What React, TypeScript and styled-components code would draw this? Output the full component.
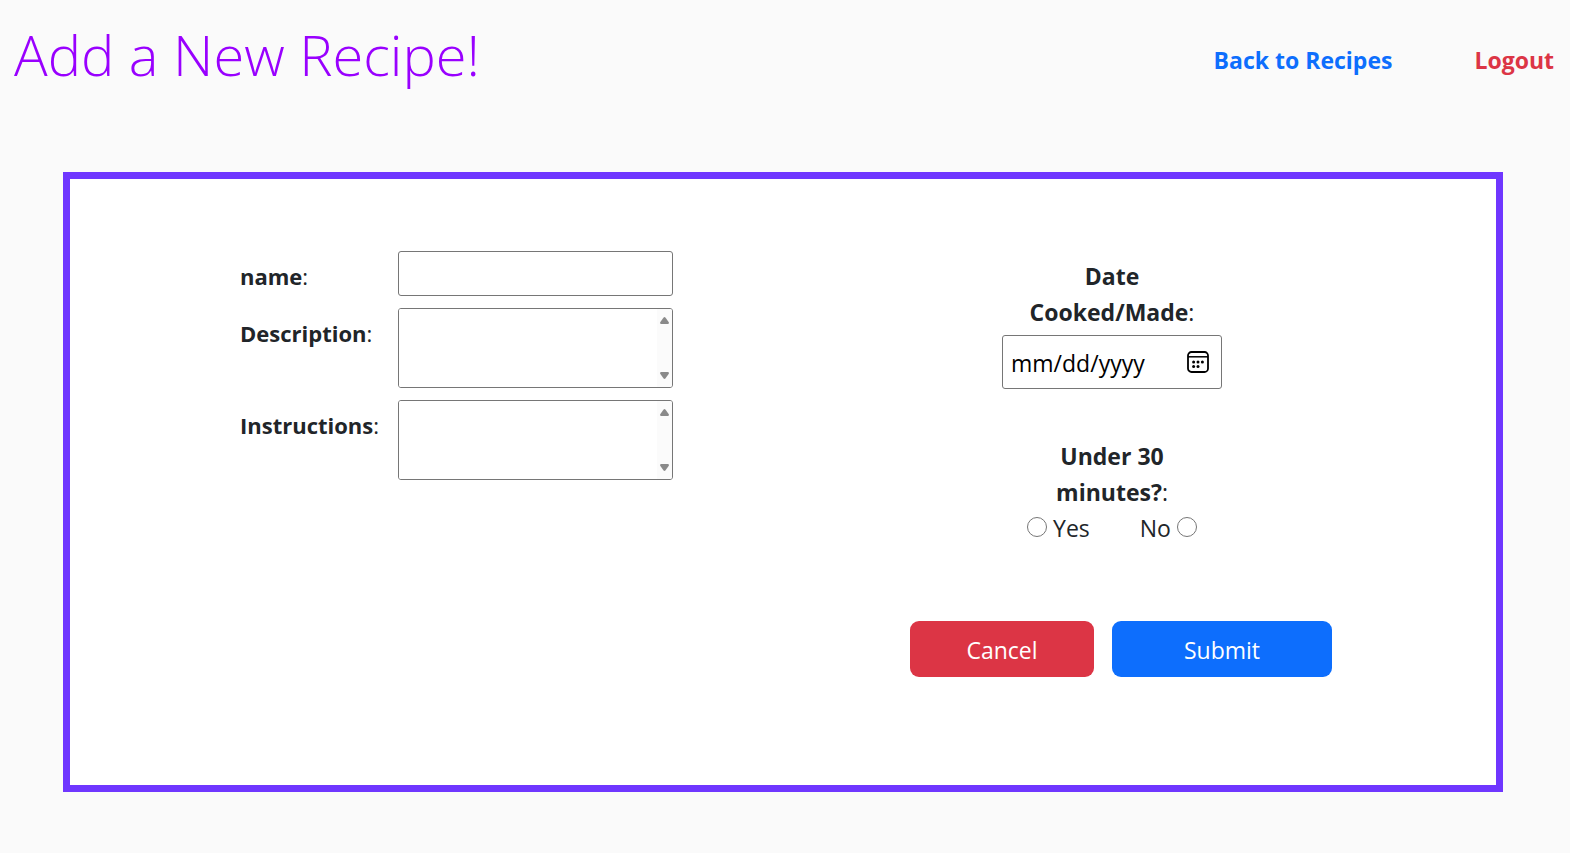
import React from "react";
import styled, { createGlobalStyle } from "styled-components";

const GlobalStyle = createGlobalStyle`
  * { box-sizing: border-box; }
  body {
    margin: 0;
    background: #fafafa;
    color: #212529;
    font: 400 23px/36px "Open Sans", "Noto Sans", sans-serif;
  }
  b { font-weight: 700; }
  input, textarea, button { font: inherit; }
`;

const Header = styled.header`
  display: flex;
  align-items: flex-start;
  justify-content: space-between;
  padding: 18px 16px 0 14px;
`;

const Title = styled.h1`
  margin: 0;
  font-size: 56px;
  font-weight: 300;
  line-height: 72px;
  color: #9900ff;
`;

const Nav = styled.nav`
  display: flex;
  gap: 82px;
  padding-top: 24px;
`;

const NavLink = styled.a<{ $color: string }>`
  color: ${(p) => p.$color};
  font-weight: 700;
  text-decoration: none;
`;

const Card = styled.form`
  display: flex;
  justify-content: space-between;
  min-height: 620px;
  margin: 82px 67px 61px 63px;
  padding: 72px 164px 72px 170px;
  border: 7px solid #6f36ff;
  background: #fff;
`;

const Fields = styled.div`
  display: grid;
  grid-template-columns: 158px 275px;
  row-gap: 12px;
  align-content: start;
`;

const FieldLabel = styled.label`
  padding-top: 7px;
  font-size: 22px;
`;

const TextInput = styled.input`
  width: 100%;
  height: 45px;
  padding: 0 8px;
  border: 1px solid #767676;
  border-radius: 3px;
  background: #fff;
`;

const AreaFrame = styled.div`
  display: flex;
  height: 80px;
  border: 1px solid #767676;
  border-radius: 3px;
  overflow: hidden;
`;

const Area = styled.textarea`
  flex: 1;
  min-width: 0;
  padding: 3px;
  border: 0;
  outline: 0;
  resize: none;
  overflow: hidden;
  background: #fff;
`;

const ScrollTrack = styled.div`
  display: flex;
  flex-direction: column;
  justify-content: space-between;
  align-items: center;
  width: 15px;
  padding: 8px 0;
  background: #fbfbfb;
`;

const Details = styled.div`
  width: 422px;
`;

const Group = styled.fieldset`
  display: flex;
  flex-direction: column;
  align-items: center;
  min-width: 0;
  margin: 0 18px 0 0;
  padding: 7px 0 0;
  border: 0;
  text-align: center;
`;

const GroupLabel = styled.label`
  width: 180px;
`;

const DateFrame = styled.div`
  position: relative;
  width: 220px;
  margin: 5px 0 42px;
`;

const DateInput = styled.input`
  display: block;
  width: 100%;
  height: 54px;
  padding: 4px 8px 2px;
  border: 1px solid #767676;
  border-radius: 3px;
  background: #fff;
  color: #000;
  &::-webkit-datetime-edit-fields-wrapper { padding: 0; }
  &::-webkit-datetime-edit-month-field,
  &::-webkit-datetime-edit-day-field,
  &::-webkit-datetime-edit-year-field { padding: 0; }
  &::-webkit-calendar-picker-indicator { opacity: 0; }
`;

const CalendarIcon = styled.svg`
  position: absolute;
  top: 16px;
  right: 13px;
  pointer-events: none;
`;

const Choices = styled.div`
  display: flex;
  gap: 50px;
`;

const Choice = styled.label`
  display: flex;
  align-items: center;
  gap: 6px;
`;

const Radio = styled.input`
  width: 20px;
  height: 20px;
  margin: 0 0 2px;
`;

const Actions = styled.div`
  display: grid;
  grid-template-columns: 184px 220px;
  gap: 18px;
  margin-top: 75px;
`;

const Button = styled.button<{ $color: string }>`
  height: 56px;
  padding: 2px 0 0;
  border: 0;
  border-radius: 9px;
  background: ${(p) => p.$color};
  color: #fff;
`;

function ScrollArrows() {
  return (
    <ScrollTrack aria-hidden="true">
      <svg width="9" height="7" viewBox="0 0 9 7">
        <path d="M3.6.5Q4.5-.3 5.4.5L8.8 5.2Q9.3 6.8 7.8 7H1.2Q-.3 6.8.2 5.2Z" fill="#8a8a8a" />
      </svg>
      <svg width="9" height="7" viewBox="0 0 9 7">
        <path d="M3.6 6.5Q4.5 7.3 5.4 6.5L8.8 1.8Q9.3.2 7.8 0H1.2Q-.3.2.2 1.8Z" fill="#8a8a8a" />
      </svg>
    </ScrollTrack>
  );
}

function TextArea({ id }: { id: string }) {
  return (
    <AreaFrame>
      <Area id={id} name={id} />
      <ScrollArrows />
    </AreaFrame>
  );
}

export default function App() {
  return (
    <>
      <GlobalStyle />
      <Header>
        <Title>Add a New Recipe!</Title>
        <Nav>
          <NavLink href="#recipes" $color="#0d6efd">Back to Recipes</NavLink>
          <NavLink href="#logout" $color="#dc3545">Logout</NavLink>
        </Nav>
      </Header>
      <Card onSubmit={(e) => e.preventDefault()}>
        <Fields>
          <FieldLabel htmlFor="name"><b>name</b>:</FieldLabel>
          <TextInput id="name" name="name" type="text" />
          <FieldLabel htmlFor="description"><b>Description</b>:</FieldLabel>
          <TextArea id="description" />
          <FieldLabel htmlFor="instructions"><b>Instructions</b>:</FieldLabel>
          <TextArea id="instructions" />
        </Fields>
        <Details>
          <Group>
            <GroupLabel htmlFor="date"><b>Date Cooked/Made</b>:</GroupLabel>
            <DateFrame>
              <DateInput id="date" name="date" type="date" />
              <CalendarIcon width="22" height="22" viewBox="0 0 22 22" aria-hidden="true">
                <rect x="1" y="1" width="20" height="20" rx="3.5" fill="none" stroke="#000" strokeWidth="1.8" />
                <path d="M1 5.8H21" stroke="#000" strokeWidth="1.5" />
                <g fill="#000">
                  <circle cx="6.6" cy="11" r="1.5" />
                  <circle cx="11" cy="11" r="1.5" />
                  <circle cx="15.4" cy="11" r="1.5" />
                  <circle cx="6.6" cy="15.4" r="1.5" />
                  <circle cx="11" cy="15.4" r="1.5" />
                </g>
              </CalendarIcon>
            </DateFrame>
          </Group>
          <Group role="radiogroup" aria-labelledby="under30">
            <GroupLabel as="div" id="under30"><b>Under 30<br />minutes?</b>:</GroupLabel>
            <Choices>
              <Choice><Radio type="radio" name="under30" value="yes" />Yes</Choice>
              <Choice>No<Radio type="radio" name="under30" value="no" /></Choice>
            </Choices>
          </Group>
          <Actions>
            <Button type="button" $color="#dc3545">Cancel</Button>
            <Button type="submit" $color="#0d6efd">Submit</Button>
          </Actions>
        </Details>
      </Card>
    </>
  );
}
